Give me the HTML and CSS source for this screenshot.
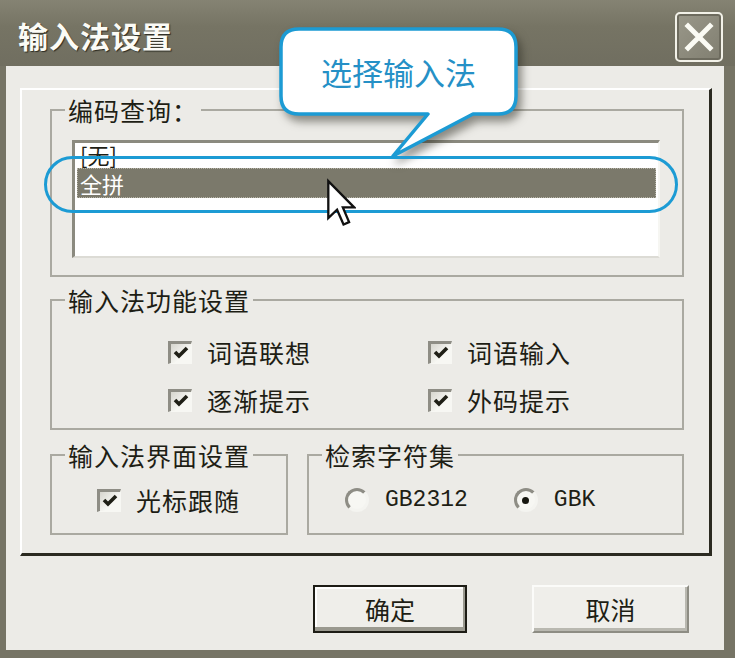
FILE: index.html
```html
<!DOCTYPE html>
<html lang="zh-CN">
<head>
    <meta charset="UTF-8">
    <title>输入法设置</title>
    <link rel="stylesheet" href="styles.css">
</head>
<body>
    <div class="win">
        <div class="tb">
            <span class="tt">输入法设置</span>
            <button class="cx">
                <svg width="30" height="30" viewBox="0 0 30 30"><path d="M4 4 L26 26 M26 4 L4 26" stroke="#fbfbf4" stroke-width="5" stroke-linecap="square"/></svg>
            </button>
        </div>
        <div class="cl">
            <div class="pn">
                <fieldset class="gp g1">
                    <legend>编码查询：</legend>
                    <div class="lb">
                        <div class="it">[无]</div>
                        <div class="it sel">全拼</div>
                    </div>
                </fieldset>
                <fieldset class="gp g2">
                    <legend>输入法功能设置</legend>
                    <div class="ck-grid">
                        <label class="ck"><span class="bx"><svg width="16" height="14" viewBox="0 0 16 14"><path d="M2 6 L6 10 L14 2" fill="none" stroke="#1f1f16" stroke-width="3.6"/></svg></span>词语联想</label>
                        <label class="ck"><span class="bx"><svg width="16" height="14" viewBox="0 0 16 14"><path d="M2 6 L6 10 L14 2" fill="none" stroke="#1f1f16" stroke-width="3.6"/></svg></span>词语输入</label>
                        <label class="ck"><span class="bx"><svg width="16" height="14" viewBox="0 0 16 14"><path d="M2 6 L6 10 L14 2" fill="none" stroke="#1f1f16" stroke-width="3.6"/></svg></span>逐渐提示</label>
                        <label class="ck"><span class="bx"><svg width="16" height="14" viewBox="0 0 16 14"><path d="M2 6 L6 10 L14 2" fill="none" stroke="#1f1f16" stroke-width="3.6"/></svg></span>外码提示</label>
                    </div>
                </fieldset>
                <div class="gr">
                    <fieldset class="gp g3">
                        <legend>输入法界面设置</legend>
                        <label class="ck one"><span class="bx"><svg width="16" height="14" viewBox="0 0 16 14"><path d="M2 6 L6 10 L14 2" fill="none" stroke="#1f1f16" stroke-width="3.6"/></svg></span>光标跟随</label>
                    </fieldset>
                    <fieldset class="gp g4">
                        <legend>检索字符集</legend>
                        <div class="rr">
                            <label class="rd"><span class="rc"></span><span class="mono">GB2312</span></label>
                            <label class="rd"><span class="rc on"></span><span class="mono">GBK</span></label>
                        </div>
                    </fieldset>
                </div>
            </div>
            <div class="bt">
                <button class="btn df">确定</button>
                <button class="btn">取消</button>
            </div>
        </div>

        <div class="co">
            <svg class="co-bg" width="244" height="136" viewBox="0 0 244 136">
                <path d="M21 3 H220 Q238 3 238 21 V70 Q238 88 220 88 H195 L115 130 L150 88 H21 Q3 88 3 70 V21 Q3 3 21 3 Z" fill="#fff" stroke="#1c9bd4" stroke-width="3.5" stroke-linejoin="round"/>
            </svg>
            <div class="co-tx">选择输入法</div>
        </div>
        <div class="pill"></div>
        <svg class="cur" width="30" height="50" viewBox="0 0 13 21">
            <path d="M1 1 L1 17 L4.8 13.4 L7.6 19.8 L10 18.8 L7.3 12.4 L12.2 12.4 Z" fill="#fff" stroke="#111" stroke-width="1" stroke-linejoin="miter"/>
        </svg>
    </div>
</body>
</html>
```

FILE: styles.css
```css
body {
    margin: 0;
    background: #ffffff;
    font-family: "Noto Sans CJK SC", "Liberation Sans", sans-serif;
}
.win {
    position: relative;
    width: 735px;
    height: 658px;
    background: #767465;
    display: flex;
    flex-direction: column;
    box-sizing: border-box;
}
.tb {
    height: 66px;
    flex: none;
    display: flex;
    justify-content: space-between;
    align-items: flex-start;
    padding: 0 12px 0 18px;
    background: linear-gradient(#858373, #767464 40%, #706e60);
}
.tt {
    margin-top: 15px;
    color: #fbfbf6;
    font-size: 30px;
    font-weight: bold;
    line-height: 40px;
    letter-spacing: 1px;
    text-shadow: 1px 1px 1px #2c2b22;
}
.cx {
    margin-top: 12px;
    width: 48px;
    height: 50px;
    padding: 0;
    border: 2px solid #f2f1e8;
    border-radius: 5px;
    background: linear-gradient(135deg, #9a988a, #807e70);
    box-shadow: inset 0 0 0 2px #6d6b5e;
    display: flex;
    align-items: center;
    justify-content: center;
}
.cl {
    flex: 1;
    margin: 0 11px 8px 6px;
    background: #ecebe7;
    padding: 22px 12px 17px 14px;
    display: flex;
    flex-direction: column;
}
.pn {
    border-top: 2px solid #ffffff;
    border-left: 2px solid #ffffff;
    border-right: 3px solid #2b2a21;
    border-bottom: 3px solid #2b2a21;
    padding: 5px 25px 18px 28px;
}
.gp {
    margin: 0;
    padding: 0;
    border: 2px solid #aaa9a1;
    min-width: 0;
}
.gp legend {
    margin-left: 13px;
    padding: 0 3px;
    font-size: 25px;
    line-height: 30px;
    color: #1e1e15;
    letter-spacing: 1px;
}
.lb {
    margin: 15px 22px 17px 20px;
    height: 118px;
    box-sizing: border-box;
    background: #ffffff;
    border-top: 3px solid #8b8a7f;
    border-left: 3px solid #8b8a7f;
    border-right: 2px solid #f6f6f2;
    border-bottom: 2px solid #dcdbd5;
}
.it {
    height: 30px;
    line-height: 30px;
    padding-left: 5px;
    font-size: 22px;
    color: #1e1e15;
}
.it:first-child {
    height: 25px;
    line-height: 22px;
}
.it.sel {
    margin: 0 2px;
    padding-left: 3px;
    background: #7b796b;
    color: #ffffff;
    outline: 1px dotted #b5b3a6;
    outline-offset: -1px;
}
.g2 {
    margin-top: 8px;
}
.ck-grid {
    display: grid;
    grid-template-columns: 260px 260px;
    grid-auto-rows: 48px;
    margin: 13px 0 4px 116px;
}
.ck {
    display: flex;
    align-items: center;
    gap: 15px;
    font-size: 25px;
    color: #1e1e15;
    letter-spacing: 1px;
}
.bx {
    width: 24px;
    height: 23px;
    box-sizing: border-box;
    flex: none;
    border-top: 3px solid #8e8d85;
    border-left: 3px solid #8e8d85;
    border-right: 1px solid #f7f7f3;
    border-bottom: 1px solid #f7f7f3;
    background: linear-gradient(135deg, #d6d5ce, #f7f7f3 60%);
    display: flex;
    align-items: center;
    justify-content: center;
}
.gr {
    margin-top: 10px;
    display: flex;
    gap: 19px;
}
.g3 {
    width: 238px;
    box-sizing: border-box;
}
.g4 {
    flex: 1;
}
.ck.one {
    height: 40px;
    margin: 10px 0 13px 45px;
}
.rr {
    height: 40px;
    margin: 10px 0 13px 36px;
    display: flex;
    align-items: center;
    gap: 46px;
}
.rd {
    display: flex;
    align-items: center;
    gap: 16px;
}
.rc {
    width: 24px;
    height: 24px;
    box-sizing: border-box;
    border-radius: 50%;
    border: 3px solid;
    border-color: #8e8d85 #f4f4f0 #f4f4f0 #8e8d85;
    background: #f7f7f3;
    display: flex;
    align-items: center;
    justify-content: center;
}
.rc.on::after {
    content: "";
    width: 7px;
    height: 7px;
    border-radius: 50%;
    background: #16160f;
}
.mono {
    font-family: "Liberation Mono", "DejaVu Sans Mono", monospace;
    font-size: 23px;
    color: #1e1e15;
}
.bt {
    margin-top: 29px;
    display: flex;
    justify-content: flex-end;
    gap: 65px;
    padding-right: 23px;
}
.btn {
    width: 157px;
    height: 48px;
    box-sizing: border-box;
    background: #efeeea;
    border: 2px solid;
    border-color: #fbfbf9 #8d8c83 #8d8c83 #fbfbf9;
    box-shadow: inset -2px -3px 0 #b9b8b0;
    font-family: "Noto Sans CJK SC", sans-serif;
    font-size: 25px;
    color: #1e1e15;
    padding: 0;
}
.btn.df {
    width: 154px;
    border: 2px solid #1d1c15;
    box-shadow: inset -2px -4px 0 #9a998f, inset 2px 2px 0 #ffffff;
}
.co {
    position: absolute;
    left: 278px;
    top: 26px;
    width: 244px;
    height: 136px;
}
.co-bg {
    position: absolute;
    left: 0;
    top: 0;
    filter: drop-shadow(4px 6px 4px rgba(40, 40, 30, 0.5));
}
.co-tx {
    position: relative;
    width: 241px;
    height: 91px;
    display: flex;
    align-items: center;
    justify-content: center;
    font-size: 31px;
    color: #2590c6;
}
.pill {
    position: absolute;
    left: 44px;
    top: 156px;
    width: 634px;
    height: 57px;
    box-sizing: border-box;
    border: 3px solid #1c9bd4;
    border-radius: 29px;
}
.cur {
    position: absolute;
    left: 326px;
    top: 178px;
}
```
